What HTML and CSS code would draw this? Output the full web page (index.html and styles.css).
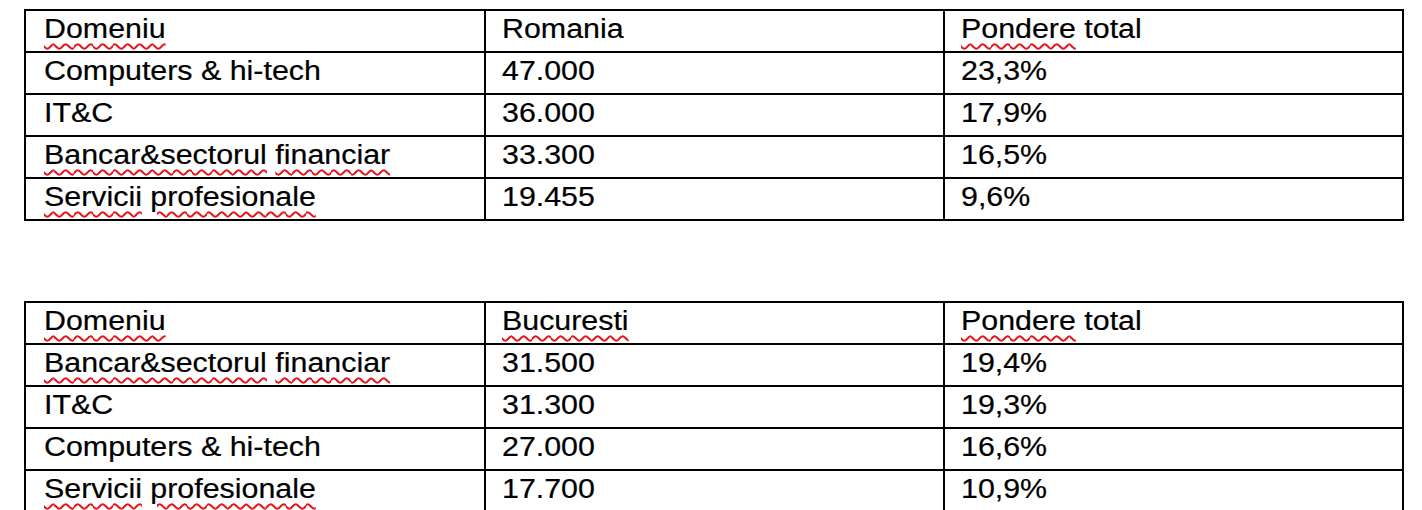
FILE: index.html
```html
<!DOCTYPE html>
<html lang="ro">
<head>
<meta charset="utf-8">
<title>Domenii</title>
<link rel="stylesheet" href="styles.css">
</head>
<body>
<main class="doc">
  <table class="grid">
    <colgroup><col class="c1"><col class="c2"><col class="c3"></colgroup>
    <tr><td><span class="t"><span class="sp">Domeniu</span></span></td><td><span class="t">Romania</span></td><td><span class="t"><span class="sp">Pondere</span> total</span></td></tr>
    <tr><td><span class="t">Computers &amp; hi-tech</span></td><td><span class="t">47.000</span></td><td><span class="t">23,3%</span></td></tr>
    <tr><td><span class="t">IT&amp;C</span></td><td><span class="t">36.000</span></td><td><span class="t">17,9%</span></td></tr>
    <tr><td><span class="t"><span class="sp">Bancar&amp;sectorul</span> <span class="sp">financiar</span></span></td><td><span class="t">33.300</span></td><td><span class="t">16,5%</span></td></tr>
    <tr><td><span class="t"><span class="sp">Servicii</span> <span class="sp">profesionale</span></span></td><td><span class="t">19.455</span></td><td><span class="t">9,6%</span></td></tr>
  </table>

  <table class="grid second">
    <colgroup><col class="c1"><col class="c2"><col class="c3"></colgroup>
    <tr><td><span class="t"><span class="sp">Domeniu</span></span></td><td><span class="t"><span class="sp">Bucuresti</span></span></td><td><span class="t"><span class="sp">Pondere</span> total</span></td></tr>
    <tr><td><span class="t"><span class="sp">Bancar&amp;sectorul</span> <span class="sp">financiar</span></span></td><td><span class="t">31.500</span></td><td><span class="t">19,4%</span></td></tr>
    <tr><td><span class="t">IT&amp;C</span></td><td><span class="t">31.300</span></td><td><span class="t">19,3%</span></td></tr>
    <tr><td><span class="t">Computers &amp; hi-tech</span></td><td><span class="t">27.000</span></td><td><span class="t">16,6%</span></td></tr>
    <tr><td><span class="t"><span class="sp">Servicii</span> <span class="sp">profesionale</span></span></td><td><span class="t">17.700</span></td><td><span class="t">10,9%</span></td></tr>
  </table>
</main>
</body>
</html>
```

FILE: styles.css
```css
html, body {
  margin: 0;
  padding: 0;
  background: #fff;
}

.doc {
  padding: 9px 0 0 24px;
  font-family: "Liberation Sans", Arial, sans-serif;
  font-size: 27px;
  color: #000;
}

.grid {
  width: 1380px;
  table-layout: fixed;
  border-collapse: separate;
  border-spacing: 2px;
  background: #000;
}

.grid.second {
  margin-top: 80px;
}

.c1 { width: 458px; }
.c2 { width: 457px; }
.c3 { width: 457px; }

.grid td {
  background: #fff;
  height: 40px;
  padding: 0 0 0 18px;
  vertical-align: top;
  line-height: 36px;
  white-space: nowrap;
  overflow: hidden;
}

.grid td + td {
  padding-left: 16px;
}

.t {
  display: inline-block;
  transform: scaleX(1.125);
  transform-origin: 0 50%;
  -webkit-text-stroke: 0.2px #000;
}

.sp {
  text-decoration: underline wavy #e8141c;
  text-decoration-thickness: 1.5px;
  text-underline-offset: 5px;
}
```
